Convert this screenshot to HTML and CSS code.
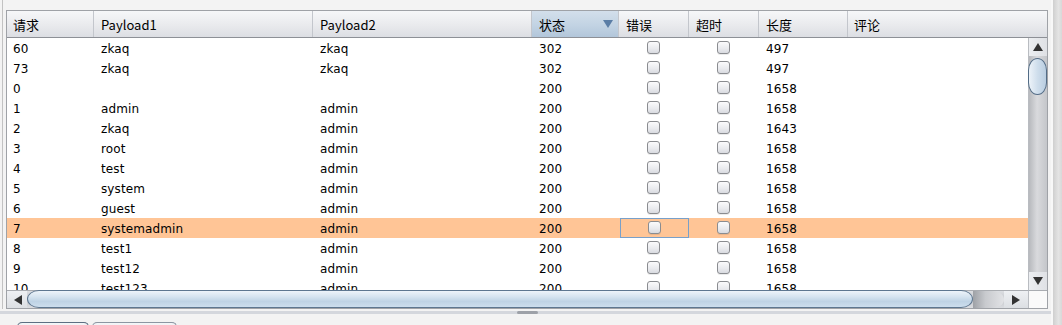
FILE: index.html
```html
<!DOCTYPE html>
<html lang="zh">
<head>
    <meta charset="UTF-8">
    <title>Intruder 结果</title>
    <link rel="stylesheet" href="styles.css">
</head>
<body>
    <div class="main">
        <div class="panel">
            <div class="pane">
                <div class="header">
                    <div class="hcell">请求</div>
                    <div class="hcell">Payload1</div>
                    <div class="hcell">Payload2</div>
                    <div class="hcell sorted">状态
                        <svg class="sort-arrow" width="10" height="8" viewBox="0 0 10 8"><path d="M0 0H10L5 8Z" fill="#5b7ea6"/></svg>
                    </div>
                    <div class="hcell">错误</div>
                    <div class="hcell">超时</div>
                    <div class="hcell">长度</div>
                    <div class="hcell last">评论</div>
                </div>
                <div class="viewport" id="rows"></div>
                <div class="vscroll">
                    <div class="varrow"><svg width="10" height="8" viewBox="0 0 10 8"><path d="M5 0L10 8H0Z" fill="#333"/></svg></div>
                    <div class="vtrack"><div class="vthumb"></div></div>
                    <div class="varrow"><svg width="10" height="8" viewBox="0 0 10 8"><path d="M0 0H10L5 8Z" fill="#333"/></svg></div>
                </div>
                <div class="hscroll">
                    <div class="harrow left"><svg width="8" height="10" viewBox="0 0 8 10"><path d="M0 5L8 0V10Z" fill="#333"/></svg></div>
                    <div class="hthumb"></div>
                    <div class="htrack"></div>
                    <div class="harrow right"><svg width="8" height="10" viewBox="0 0 8 10"><path d="M8 5L0 0V10Z" fill="#333"/></svg></div>
                </div>
                <div class="corner"></div>
            </div>
        </div>
        <div class="divider"><span class="grip"></span></div>
        <div class="tabs">
            <span class="tab first"></span>
            <span class="tab second"></span>
        </div>
    </div>
    <div class="side"></div>

    <script>
        var results = [
            ["60", "zkaq", "zkaq", "302", "497"],
            ["73", "zkaq", "zkaq", "302", "497"],
            ["0", "", "", "200", "1658"],
            ["1", "admin", "admin", "200", "1658"],
            ["2", "zkaq", "admin", "200", "1643"],
            ["3", "root", "admin", "200", "1658"],
            ["4", "test", "admin", "200", "1658"],
            ["5", "system", "admin", "200", "1658"],
            ["6", "guest", "admin", "200", "1658"],
            ["7", "systemadmin", "admin", "200", "1658"],
            ["8", "test1", "admin", "200", "1658"],
            ["9", "test12", "admin", "200", "1658"],
            ["10", "test123", "admin", "200", "1658"]
        ];
        var html = "";
        for (var i = 0; i < results.length; i++) {
            var r = results[i];
            var selected = r[0] === "7";
            html += '<div class="row' + (selected ? ' selected' : '') + '">' +
                '<div class="cell">' + r[0] + '</div>' +
                '<div class="cell">' + r[1] + '</div>' +
                '<div class="cell">' + r[2] + '</div>' +
                '<div class="cell">' + r[3] + '</div>' +
                '<div class="cell check' + (selected ? ' focused' : '') + '"><span class="box"></span></div>' +
                '<div class="cell check"><span class="box"></span></div>' +
                '<div class="cell">' + r[4] + '</div>' +
                '<div class="cell"></div>' +
                '</div>';
        }
        document.getElementById("rows").innerHTML = html;
    </script>
</body>
</html>
```

FILE: styles.css
```css
body {
    margin: 0;
    width: 1062px;
    height: 325px;
    overflow: hidden;
    display: flex;
    background: #f3f3f3;
    font-family: 'DejaVu Sans', sans-serif;
    font-size: 12px;
    color: #000;
}
.main {
    width: 1051px;
    display: flex;
    flex-direction: column;
}
.side {
    flex: 1;
    border-left: 2px solid #f8f8f8;
    background: linear-gradient(to right, #cfcfcf, #e4e4e4 60%, #d8d8d8);
}
.panel {
    margin-left: 2px;
    border-left: 1px solid #c2c2c2;
    padding: 10px 3px 0 3px;
}
.pane {
    width: 1042px;
    box-sizing: border-box;
    border: 1px solid #9fa2a7;
    display: grid;
    grid-template-columns: 1021px 19px;
    grid-template-rows: 27px 252px 18px;
    background: #fff;
}
.header {
    grid-column: 1 / 3;
    display: grid;
    grid-template-columns: 87px 219px 219px 87px 70px 70px 89px 1fr;
    border-bottom: 1px solid #8d9096;
    background: linear-gradient(to bottom, #f6f7f9, #e9eaed 55%, #dcdee3);
}
.hcell {
    display: flex;
    align-items: center;
    padding-left: 7px;
    border-right: 1px solid #c3c6cc;
    font-family: 'Noto Sans CJK SC', 'DejaVu Sans', sans-serif;
    font-size: 13px;
    position: relative;
}
.hcell:first-child {
    padding-left: 6px;
}
.hcell.last {
    padding-left: 6px;
    border-right: none;
}
.hcell.sorted {
    background: linear-gradient(to bottom, #d3dfeb, #c2d3e3 55%, #b2c6da);
}
.sort-arrow {
    position: absolute;
    right: 5px;
    top: 9px;
}
.viewport {
    overflow: hidden;
    background: #fff;
}
.row {
    display: grid;
    grid-template-columns: 87px 219px 219px 87px 70px 70px 89px 1fr;
    height: 20px;
}
.row.selected {
    background: #ffc596;
}
.cell {
    display: flex;
    align-items: center;
    padding: 2px 0 0 7px;
    white-space: nowrap;
    letter-spacing: 0.1px;
}
.cell:first-child {
    padding-left: 6px;
}
.cell.check {
    justify-content: center;
    padding: 0 1px 0 0;
}
.cell.focused {
    box-shadow: inset 1px 0 0 #79a0c9, inset -1px 0 0 #79a0c9, inset 0 1px 0 #79a0c9, inset 0 -1px 0 #79a0c9;
    margin-left: 1px;
}
.box {
    width: 11px;
    height: 11px;
    border: 1px solid #8a8c90;
    border-radius: 3px;
    background: linear-gradient(to bottom, #fbfbfc, #e9eaee 60%, #d9dbe0);
    box-shadow: 0 1px 0 rgba(0, 0, 0, 0.08);
    margin-top: -1px;
}
.vscroll {
    display: flex;
    flex-direction: column;
    border-left: 1px solid #b9bcc1;
    background: linear-gradient(to right, #d4d6da, #e6e7ea 50%, #d2d4d8);
}
.varrow {
    height: 18px;
    display: flex;
    align-items: center;
    justify-content: center;
    background: linear-gradient(to right, #eceef1, #dfe1e5);
}
.vtrack {
    flex: 1;
    padding-top: 2px;
    background: linear-gradient(to right, #b7b9bd, #d9dadd 45%, #c4c6ca);
}
.vthumb {
    height: 37px;
    margin-left: -1px;
    box-sizing: border-box;
    border: 1px solid #536c86;
    border-radius: 14px / 18px;
    background: linear-gradient(to right, #edf3f9, #cfdeec 50%, #b9cde0);
}
.hscroll {
    display: flex;
    border-top: 1px solid #a9acb1;
    background: linear-gradient(to bottom, #dcdee2, #c6c8cc 50%, #dadce0);
}
.harrow {
    display: flex;
    align-items: center;
    justify-content: center;
    background: linear-gradient(to bottom, #eef0f3, #dcdfe3);
}
.harrow.left {
    width: 20px;
    padding-left: 2px;
    box-sizing: border-box;
}
.harrow.right {
    width: 24px;
}
.hthumb {
    width: 946px;
    box-sizing: border-box;
    border: 1px solid #5e7790;
    border-radius: 12px / 9px;
    margin-top: -1px;
    background: linear-gradient(to bottom, #eef4fa, #d6e4f0 35%, #bfd3e5 65%, #cddeed);
}
.htrack {
    flex: 1;
    background: linear-gradient(to right, #9ea1a6, #c8cace 40%, #e2e3e6);
    border-radius: 0 12px 12px 0 / 0 9px 9px 0;
}
.corner {
    border-top: 1px solid #a9acb1;
    border-left: 1px solid #b9bcc1;
    background: #fafafa;
}
.divider {
    height: 3px;
    margin-top: 2px;
    background: #d4d7dd;
    display: flex;
    justify-content: center;
}
.grip {
    width: 21px;
    height: 3px;
    margin-left: 4px;
    border-radius: 2px;
    background: #9da1a8;
}
.tabs {
    flex: 1;
    display: flex;
    gap: 3px;
    padding: 8px 0 0 17px;
}
.tab {
    height: 10px;
    border: 1px solid #5d6f82;
    border-bottom: none;
    border-radius: 5px 5px 0 0;
    background: linear-gradient(to bottom, #f4f6f8, #e2e5ea);
}
.tab.first {
    width: 70px;
}
.tab.second {
    width: 83px;
    border-color: #8c96a2;
}
```
